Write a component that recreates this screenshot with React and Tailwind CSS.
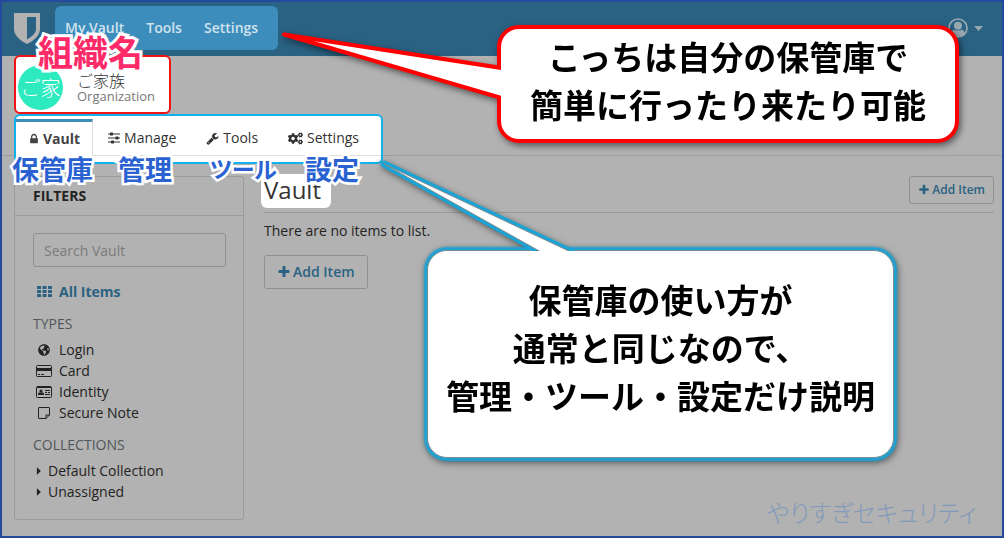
import React, { useState } from "react";
import { FaCogs, FaGlobeAmericas } from "react-icons/fa";

const jpFont = "font-['Noto_Sans_CJK_JP',sans-serif]";

const outlineText =
    "absolute font-bold leading-none whitespace-nowrap [paint-order:stroke_fill] [font-feature-settings:'palt']";

const labelText = `${outlineText} top-[155px] text-[#2a62d2] [-webkit-text-stroke:5px_#fff]`;

function Glyph({ d, className }) {
    return (
        <svg viewBox="0 0 1792 1792" className={className} fill="currentColor" aria-hidden="true">
            <path d={d} />
        </svg>
    );
}

const lockPath =
    "M640 768h512v-192q0-106-75-181t-181-75-181 75-75 181v192zm832 96v576q0 40-28 68t-68 28h-960q-40 0-68-28t-28-68v-576q0-40 28-68t68-28h32v-192q0-184 132-316t316-132 316 132 132 316v192h32q40 0 68 28t28 68z";
const wrenchPath =
    "M448 1472q0-26-19-45t-45-19-45 19-19 45 19 45 45 19 45-19 19-45zm644-420l-682 682q-37 37-90 37-52 0-91-37l-106-108q-38-36-38-90 0-53 38-91l681-681q39 98 114.500 173.500t173.500 114.500zm634-435q0 39-23 106-47 134-164.500 217.500t-258.500 83.500q-185 0-316.500-131.500t-131.500-316.500 131.500-316.500 316.500-131.500q58 0 121.500 16.500t107.500 46.500q16 11 16 28t-16 28l-293 169v224l193 107q5-3 79-48.500t135.500-81 70.500-35.500q15 0 23.500 10t8.500 25z";
const plusPath =
    "M1600 736v192q0 40-28 68t-68 28h-416v416q0 40-28 68t-68 28h-192q-40 0-68-28t-28-68v-416h-416q-40 0-68-28t-28-68v-192q0-40 28-68t68-28h416v-416q0-40 28-68t68-28h192q40 0 68 28t28 68v416h416q40 0 68 28t28 68z";
const caretRightPath =
    "M1152 896q0 26-19 45l-448 448q-19 19-45 19t-45-19-19-45v-896q0-26 19-45t45-19 45 19l448 448q19 19 19 45z";

function ShieldLogo() {
    return (
        <svg viewBox="0 0 26 31" className="w-[26px] h-[31px]" fill="#b2b2b2" aria-hidden="true">
            <path
                fillRule="evenodd"
                d="M1 0h24a1 1 0 0 1 1 1v15c0 7-7 12-13 15C7 28 0 23 0 16V1a1 1 0 0 1 1-1zM13 4v22.500c5-3 9-6.500 9-10.500V4z"
            />
        </svg>
    );
}

function SlidersIcon() {
    return (
        <svg viewBox="0 0 12 12" className="w-3 h-3" fill="currentColor" aria-hidden="true">
            <path d="M0 1.500h12v1H0zM0 5.500h12v1H0zM0 9.500h12v1H0z" />
            <rect x="2" y="0.500" width="3" height="3" rx="0.500" />
            <rect x="7.500" y="4.500" width="3" height="3" rx="0.500" />
            <rect x="3" y="8.500" width="3" height="3" rx="0.500" />
        </svg>
    );
}

function GridIcon() {
    return (
        <svg viewBox="0 0 15 11" className="w-[15px] h-[11px]" fill="currentColor" aria-hidden="true">
            {[0, 4, 8].map((y) =>
                [0, 5.5, 11].map((x) => <rect key={`${x}-${y}`} x={x} y={y} width="4" height="3" rx="0.5" />)
            )}
        </svg>
    );
}

function CardIcon() {
    return (
        <svg viewBox="0 0 16 12" className="w-4 h-3" aria-hidden="true">
            <rect x="0.5" y="0.5" width="15" height="11" rx="1" fill="none" stroke="currentColor" />
            <path d="M1 3h14v3H1zM2 9h2v1H2zM5 9h3v1H5z" fill="currentColor" />
        </svg>
    );
}

function IdentityIcon() {
    return (
        <svg viewBox="0 0 16 12" className="w-4 h-3" aria-hidden="true">
            <rect x="0.5" y="0.5" width="15" height="11" rx="1" fill="none" stroke="currentColor" />
            <path d="M1 0.500h14v1.500H1zM9 4h5v1H9zM9 6h2v1H9zM12 6h2v1h-2zM9 8h5v1H9z" fill="currentColor" />
            <path d="M2 9V7.500q0-1 1.500-1h3q1.500 0 1.500 1V9z" fill="currentColor" />
            <circle cx="5" cy="5" r="1.600" fill="currentColor" />
        </svg>
    );
}

function NoteIcon() {
    return (
        <svg viewBox="0 0 12 12" className="w-3 h-3" fill="none" stroke="currentColor" aria-hidden="true">
            <path d="M1 0.500h10q0.500 0 0.500 0.500v7l-3.500 3.500H1q-0.500 0-0.500-0.500V1q0-0.500 0.500-0.500zM8 11.500V8h3.500" />
        </svg>
    );
}

function UserIcon() {
    return (
        <svg viewBox="0 0 20 20" className="w-5 h-5" aria-hidden="true">
            <circle cx="10" cy="10" r="9" fill="none" stroke="currentColor" strokeWidth="1.700" />
            <circle cx="10" cy="7.800" r="4" fill="currentColor" />
            <path d="M3 15.500q1-3.800 3.500-3.800 3.500 1.800 7 0 2.500 0 3.500 3.800Q14 19 10 19T3 15.500z" fill="currentColor" />
        </svg>
    );
}

const types = [
    { name: "Login", icon: <FaGlobeAmericas className="w-3 h-3" /> },
    { name: "Card", icon: <CardIcon /> },
    { name: "Identity", icon: <IdentityIcon /> },
    { name: "Secure Note", icon: <NoteIcon /> }
];

const collections = ["Default Collection", "Unassigned"];

const tabs = [
    { name: "Manage", icon: <SlidersIcon /> },
    { name: "Tools", icon: <Glyph d={wrenchPath} className="w-[13px] h-[13px]" /> },
    { name: "Settings", icon: <FaCogs className="w-[15px] h-[15px]" /> }
];

function Navbar() {
    return (
        <header className="h-14 pl-3.5 pr-[21px] flex items-center justify-between bg-[#2a6283]">
            <div className="flex items-center gap-[15px]">
                <a href="#home" aria-label="Home"><ShieldLogo /></a>
                <nav className="h-11 pl-2.5 pr-5 flex items-center gap-[22px] rounded-md bg-[#3c8dbc] text-sm font-semibold text-[#cfe2ee]">
                    <a href="#my-vault">My Vault</a>
                    <a href="#tools">Tools</a>
                    <a href="#settings">Settings</a>
                </nav>
            </div>
            <button type="button" aria-label="Account" className="flex items-center gap-1.5 text-[#98a7b0]">
                <UserIcon />
                <svg viewBox="0 0 9 5" className="w-[9px] h-[5px]" fill="currentColor" aria-hidden="true">
                    <path d="M0 0h9L4.500 5z" />
                </svg>
            </button>
        </header>
    );
}

function OrgHeader() {
    return (
        <div className="h-[100px] px-3.5 flex flex-col items-start border-b border-[#9d9d9d]">
            <a
                href="#organization"
                className="relative -mt-px w-[157px] h-[59px] shrink-0 pl-0.5 pt-1.5 flex items-center gap-3.5 bg-white border-2 border-[#f01414] rounded-md"
            >
                <span className={`w-[45px] h-[45px] flex items-center justify-center rounded-full bg-[#2eeabf] text-white text-xl font-light ${jpFont}`}>
                    ご家
                </span>
                <span className="flex flex-col">
                    <span className={`text-base leading-4 text-[#333] font-light ${jpFont}`}>ご家族</span>
                    <span className="text-[13px] leading-4 text-[#777]">Organization</span>
                </span>
            </a>
            <nav className="relative h-[50px] w-[369px] shrink-0 pt-[3px] bg-white border-2 border-[#13b0ec] rounded-md">
                <div className="h-[37px] flex text-sm text-[#333]">
                    <a href="#vault" className="px-3 pb-px flex items-center gap-[3px] border-t-3 border-t-[#3c8dbc] border-r border-r-[#ddd] font-bold text-[#444]">
                        <Glyph d={lockPath} className="w-3 h-3.5" />
                        Vault
                    </a>
                    <div className="grow flex pt-0.5 border-b border-[#ddd]">
                        {tabs.map((tab) => (
                            <a key={tab.name} href={`#org-${tab.name.toLowerCase()}`} className="px-[15px] flex items-center gap-1">
                                {tab.icon}
                                {tab.name}
                            </a>
                        ))}
                    </div>
                </div>
            </nav>
        </div>
    );
}

function Filters() {
    const [search, setSearch] = useState("");

    return (
        <aside className="w-[230px] shrink-0 border border-[#9b9b9b] rounded-[3px] text-[#222]">
            <h2 className="h-[39px] px-[18px] flex items-center border-b border-[#9b9b9b] text-sm font-bold">FILTERS</h2>
            <div className="pl-[18px] pr-[17px] py-[17px] text-sm">
                <input
                    type="text"
                    aria-label="Search Vault"
                    placeholder="Search Vault"
                    value={search}
                    onChange={(e) => setSearch(e.target.value)}
                    className="w-full h-[34px] px-2.5 border border-[#8f9095] rounded-[3px] text-sm placeholder:text-[#7b7b7b] focus:outline-none"
                />
                <a href="#all" className="mt-3.5 h-[21px] flex items-center gap-1 font-bold text-[#2a6283]">
                    <span className="w-[22px] flex justify-center"><GridIcon /></span>
                    All Items
                </a>

                {/* Types */}
                <h3 className="mt-3 mb-[5px] leading-5 text-[#50565b]">TYPES</h3>
                <ul>
                    {types.map((type) => (
                        <li key={type.name}>
                            <a href="#type" className="h-[21px] flex items-center gap-1">
                                <span className="w-[22px] flex justify-center">{type.icon}</span>
                                {type.name}
                            </a>
                        </li>
                    ))}
                </ul>

                {/* Collections */}
                <h3 className="mt-3 mb-[5px] leading-5 text-[#50565b]">COLLECTIONS</h3>
                <ul>
                    {collections.map((name) => (
                        <li key={name}>
                            <a href="#collection" className="h-[21px] flex items-center gap-[3px]">
                                <Glyph d={caretRightPath} className="w-3 h-3.5" />
                                {name}
                            </a>
                        </li>
                    ))}
                </ul>
            </div>
        </aside>
    );
}

function VaultContent() {
    return (
        <section className="grow text-sm text-[#222]">
            <div className="h-[37px] flex items-start justify-between border-b border-[#9b9b9b]">
                <h1 className="-ml-[3px] -mt-0.5 h-[34px] pl-[3px] pr-2.5 rounded-md bg-white text-2xl leading-8 text-[#333]">
                    Vault
                </h1>
                <button type="button" className="h-7 px-2 flex items-center gap-0.5 border border-[#8f9095] rounded-[3px] text-xs font-semibold text-[#2a6283]">
                    <Glyph d={plusPath} className="w-3 h-3" />
                    Add Item
                </button>
            </div>
            <p className="mt-2 leading-5">There are no items to list.</p>
            <button type="button" className="mt-3.5 h-[34px] px-3 flex items-center gap-0.5 border border-[#8f9095] rounded-[3px] font-semibold text-[#2a6283]">
                <Glyph d={plusPath} className="w-3.5 h-3.5" />
                Add Item
            </button>
        </section>
    );
}

function Annotations() {
    return (
        <div className={`absolute inset-0 overflow-hidden pointer-events-none ${jpFont}`}>
            <span className={`${outlineText} left-[38px] top-[33px] text-[35px] text-[#ff2b69] [-webkit-text-stroke:6px_#fff]`}>
                組織名
            </span>
            <span className={`${labelText} left-3 text-[27px]`}>保管庫</span>
            <span className={`${labelText} left-[118px] text-[27px]`}>管理</span>
            <span className={`${labelText} left-[210px] pt-0.5 text-[23px]`}>ツール</span>
            <span className={`${labelText} left-[305px] text-[27px]`}>設定</span>

            {/* Red callout */}
            <div className="absolute inset-0 drop-shadow-[2px_3px_3px_rgba(0,0,0,0.5)]">
                <div className="absolute left-[497px] top-[25px] w-[462px] h-[118px] pb-2 flex items-center justify-center rounded-[22px] border-4 border-[#ff0000] bg-white">
                    <p className="text-[33px] leading-[48px] font-bold text-black text-center whitespace-nowrap">
                        こっちは自分の保管庫で
                        <br />
                        簡単に行ったり来たり可能
                    </p>
                </div>
                <svg viewBox="278 28 223 76" className="absolute left-[278px] top-7 w-[223px] h-[76px]" aria-hidden="true">
                    <path d="M505 68.500L284 34.500l221 64.500z" fill="#fff" stroke="#f00" strokeWidth="4" strokeLinejoin="round" />
                </svg>
            </div>

            {/* Blue callout */}
            <div className="absolute inset-0 drop-shadow-[1px_2px_3px_rgba(0,0,0,0.5)]">
                <div className="absolute left-[427px] top-[250px] w-[467px] h-[208px] pb-3.5 flex items-center justify-center rounded-[20px] border border-[#7c8a90] bg-white shadow-[0_0_2px_3px_#1aa4d6]">
                    <p className="text-[33px] leading-[48px] font-bold text-black text-center whitespace-nowrap">
                        保管庫の使い方が
                        <br />
                        通常と同じなので、
                        <br />
                        管理・ツール・設定だけ説明
                    </p>
                </div>
                <svg viewBox="376 156 204 95" className="absolute left-[376px] top-[156px] w-[204px] h-[95px]" aria-hidden="true">
                    <path d="M541 252L384 164l187 88z" fill="#1aa4d6" stroke="#1aa4d6" strokeWidth="7" strokeLinejoin="round" />
                    <path d="M541 252L384 164l187 88z" fill="#fff" stroke="#7c8a90" />
                </svg>
            </div>

            <span className="absolute left-[767px] top-[498px] text-2xl leading-7 font-light text-[#8399ba] whitespace-nowrap [font-feature-settings:'palt']">
                やりすぎセキュリティ
            </span>
            <div className="absolute inset-0 border-2 border-[#234a9c]" />
        </div>
    );
}

export default function App() {
    return (
        <div className="relative min-h-screen bg-[#b2b2b2] font-['Open_Sans','Noto_Sans_CJK_JP',sans-serif]">
            <Navbar />
            <OrgHeader />
            <main className="pl-3.5 pr-2.5 pt-5 pb-4 flex items-start gap-5">
                <Filters />
                <VaultContent />
            </main>
            <Annotations />
        </div>
    );
}
